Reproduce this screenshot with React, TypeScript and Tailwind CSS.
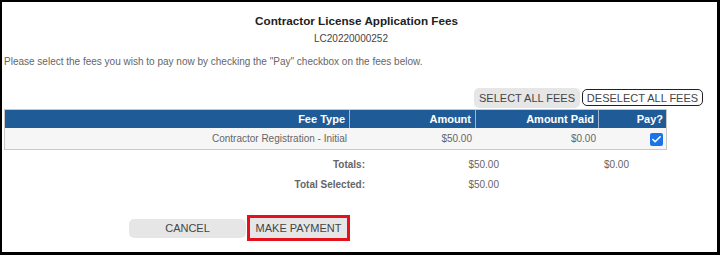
import { Check } from 'lucide-react'

const fees = [
    { type: 'Contractor Registration - Initial', amount: '$50.00', paid: '$0.00', pay: true }
]

function Checkbox({ checked }: { checked: boolean }) {
    return (
        <span className={`inline-flex w-[13px] h-[13px] rounded-[2px] items-center justify-center ${checked ? 'bg-[#1a73e8]' : 'bg-white border border-[#767676]'}`}>
            {checked && <Check size={11} strokeWidth={3.5} className="text-white" />}
        </span>
    )
}

export default function App() {
    return (
        <div className="w-[720px] h-[255px] bg-black pt-[2px] pl-[2px] pr-[3px] pb-[3px] font-['Liberation_Sans',Arial,sans-serif]">
            <div className="w-full h-full bg-white flex flex-col">
                <h1 className="mt-[12px] pr-[6px] text-center text-[11.7px] leading-[14px] font-bold text-[#222]">
                    Contractor License Application Fees
                </h1>
                <p className="mt-[4px] pr-[17px] text-center text-[10px] leading-[13px] text-[#444]">LC20220000252</p>
                <p className="mt-[11px] pl-[2px] text-[10px] leading-[12px] text-[#666]">
                    Please select the fees you wish to pay now by checking the "Pay" checkbox on the fees below.
                </p>

                <div className="mt-[20px] flex justify-end items-start gap-[2px] pr-[14px]">
                    <button className="h-[20px] w-[106px] rounded-[5px] bg-[#e6e6e6] text-[11px] text-[#444] pt-[1px]">
                        SELECT ALL FEES
                    </button>
                    <button className="mt-[1px] h-[17px] w-[121px] rounded-[5px] border-[1.5px] border-[#222] bg-white text-[11px] text-[#444] leading-[14px]">
                        DESELECT ALL FEES
                    </button>
                </div>

                <div className="ml-[2px] mt-[1px] w-[663px] border border-[#c8c8c8]">
                    <div className="grid grid-cols-[345px_126px_123px_67px] bg-[#1f5c97] h-[18px] text-white text-[11px] font-bold leading-[18px]">
                        <div className="text-right pr-[4px] border-r border-[#9fb7d0]">Fee Type</div>
                        <div className="text-right pr-[4px] border-r border-[#9fb7d0]">Amount</div>
                        <div className="text-right pr-[4px] border-r border-[#9fb7d0]">Amount Paid</div>
                        <div className="text-right pr-[3px]">Pay?</div>
                    </div>
                    {fees.map((fee, i) => (
                        <div key={i} className="grid grid-cols-[345px_126px_123px_67px] h-[21px] bg-[#f6f6f6] text-[10px] text-[#666] items-center">
                            <div className="text-right pr-[3px]">{fee.type}</div>
                            <div className="text-right pr-[4px]">{fee.amount}</div>
                            <div className="text-right pr-[3px]">{fee.paid}</div>
                            <div className="flex justify-end pr-[3px] pt-[2px]"><Checkbox checked={fee.pay} /></div>
                        </div>
                    ))}
                </div>

                <div className="mt-[9px] grid grid-cols-[363px_134px_130px] text-[10px] leading-[12px] text-[#666] gap-y-[8px]">
                    <div className="text-right font-bold">Totals:</div>
                    <div className="text-right">$50.00</div>
                    <div className="text-right">$0.00</div>
                    <div className="text-right font-bold">Total Selected:</div>
                    <div className="text-right">$50.00</div>
                    <div></div>
                </div>

                <div className="mt-[24px] ml-[127px] flex items-center gap-[1px]">
                    <button className="h-[19px] w-[117px] rounded-[5px] bg-[#e6e6e6] text-[11px] text-[#444]">CANCEL</button>
                    <button className="h-[26px] w-[103px] border-[3px] border-[#e3111b] bg-[#e6e6e6] text-[11px] text-[#444]">MAKE PAYMENT</button>
                </div>
            </div>
        </div>
    )
}
